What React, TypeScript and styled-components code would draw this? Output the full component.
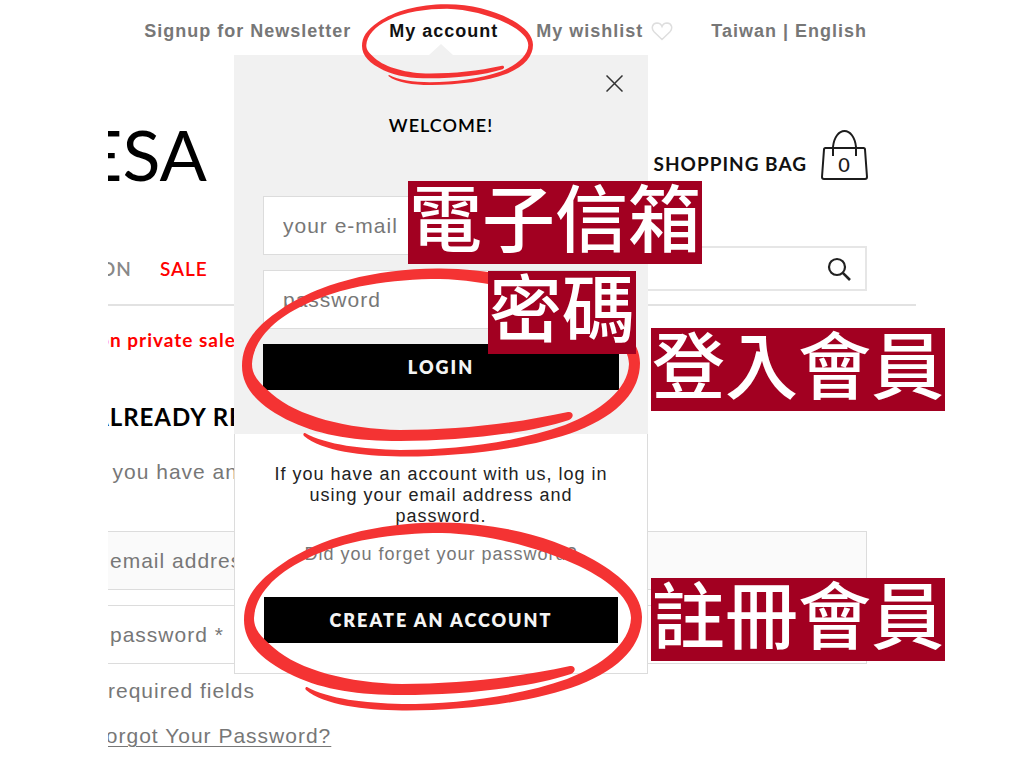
import React from "react";
import styled, { createGlobalStyle, css } from "styled-components";

const GlobalStyle = createGlobalStyle`
  * { box-sizing: border-box; }
  body { margin: 0; background: #fff; overflow-x: hidden; }
  h1, h2, p { margin: 0; font-weight: inherit; }
  button, input { font: inherit; letter-spacing: inherit; border-radius: 0; }
  a { color: inherit; text-decoration: none; }
`;

const grotesk = css`
  font-family: "Liberation Sans", Arial, sans-serif;
  letter-spacing: 1px;
`;

const geometric = css`
  font-family: Lato, "Open Sans", sans-serif;
  letter-spacing: 1px;
`;

const Page = styled.div`
  ${grotesk}
  min-height: 768px;
  padding: 0 108px;
  color: #777;
  font-size: 21px;
  line-height: 28px;
`;

const Site = styled.div`
  position: relative;
`;

const Cropped = styled.div`
  overflow: hidden;
  padding-bottom: 18px;
`;

const TopBar = styled.nav`
  display: flex;
  justify-content: flex-end;
  align-items: center;
  gap: 38px;
  height: 62px;
  padding-right: 49px;
  font-size: 18px;
  font-weight: 700;
  white-space: nowrap;
`;

const TopLink = styled.a`
  display: flex;
  align-items: center;
  gap: 8px;
`;

const AccountButton = styled.button`
  padding: 0;
  border: 0;
  background: none;
  color: #111;
`;

const Header = styled.header`
  display: flex;
  justify-content: space-between;
  align-items: flex-end;
  height: 119px;
  padding-right: 48px;
`;

const Brand = styled.a`
  display: flex;
  justify-content: flex-end;
  width: 99px;
  font-family: Lato, sans-serif;
  font-size: 70px;
  line-height: 54px;
  letter-spacing: 0;
  color: #000;
`;

const BagLink = styled.a`
  ${geometric}
  display: flex;
  align-items: flex-end;
  gap: 14px;
  font-size: 19px;
  line-height: 34px;
  font-weight: 700;
  color: #111;
`;

const NavRow = styled.div`
  display: flex;
  justify-content: space-between;
  align-items: center;
  padding: 65px 49px 13px 0;
  border-bottom: 2px solid #e2e2e2;
`;

const NavLinks = styled.nav`
  ${geometric}
  display: flex;
  gap: 28px;
  margin-left: -8px;
  font-size: 19px;
  font-weight: 600;
`;

const NavLink = styled.a<{ $sale?: boolean }>`
  color: ${(p) => (p.$sale ? "#f00" : "#888")};
`;

const Search = styled.form`
  display: flex;
  align-items: center;
  width: 300px;
  height: 45px;
  border: 2px solid #e6e6e6;
`;

const SearchInput = styled.input`
  flex: 1;
  min-width: 0;
  border: 0;
  outline: 0;
  background: none;
`;

const IconButton = styled.button`
  display: flex;
  padding: 0 14px;
  border: 0;
  background: none;
`;

const Main = styled.main`
  margin: 0 49px 0 -16px;
`;

const Promo = styled.p`
  ${geometric}
  margin-top: 20px;
  padding-left: 6px;
  font-size: 19px;
  font-weight: 700;
  color: #f00;
`;

const Heading = styled.h1`
  ${geometric}
  margin-top: 49px;
  font-size: 24px;
  font-weight: 700;
  color: #000;
`;

const Intro = styled.p`
  margin-top: 27px;
`;

const LoginForm = styled.form`
  display: flex;
  flex-direction: column;
  gap: 15px;
  margin-top: 45px;
`;

const Field = styled.input<{ $tinted?: boolean; $inset: number }>`
  width: 100%;
  height: 59px;
  padding: 0 ${(p) => p.$inset}px;
  border: 1px solid #dcdcdc;
  outline: 0;
  background: ${(p) => (p.$tinted ? "#fafafa" : "#fff")};
  &::placeholder {
    color: #777;
    opacity: 1;
  }
`;

const Required = styled.p`
  margin-top: 13px;
`;

const Forgot = styled.p`
  margin-top: 17px;
  a {
    text-decoration: underline;
    text-underline-offset: 3px;
    text-decoration-thickness: 1px;
  }
`;

const Popover = styled.section`
  position: absolute;
  top: 55px;
  right: 268px;
  width: 414px;
  &::before {
    content: "";
    position: absolute;
    top: -11px;
    left: 195px;
    border: 12px solid transparent;
    border-top: 0;
    border-bottom: 11px solid #f1f1f1;
  }
`;

const SignIn = styled.form`
  display: flex;
  flex-direction: column;
  gap: 15px;
  padding: 20px 29px 44px;
  background: #f1f1f1;
`;

const Close = styled.button`
  display: flex;
  align-self: flex-end;
  margin-right: -4px;
  padding: 0;
  border: 0;
  background: none;
`;

const Welcome = styled.h2`
  ${geometric}
  margin: 4px 0 42px;
  text-align: center;
  font-size: 18px;
  font-weight: 600;
  color: #000;
`;

const Action = styled.button`
  ${geometric}
  width: 100%;
  height: 46px;
  padding: 0;
  border: 0;
  background: #000;
  color: #f4f4f4;
  font-size: 18px;
  font-weight: 800;
  letter-spacing: 2px;
`;

const SignUp = styled.div`
  padding: 30px 29px;
  border: 1px solid #dcdcdc;
  border-top: 0;
  background: #fff;
  text-align: center;
  font-size: 18px;
  line-height: 21px;
`;

const Hint = styled.p`
  padding: 0 6px;
  color: #222;
`;

const Reminder = styled.p`
  margin: 17px 0 32px;
`;

const Ring = styled.svg<{ $x: number; $y: number; $w: number }>`
  position: absolute;
  left: ${(p) => p.$x}px;
  top: ${(p) => p.$y}px;
  width: ${(p) => p.$w}px;
  overflow: visible;
  pointer-events: none;
`;

const Tag = styled.span<{ $x: number; $y: number }>`
  position: absolute;
  left: ${(p) => p.$x}px;
  top: ${(p) => p.$y}px;
  padding: 0 1px 16px;
  background: #a20021;
  color: #fff;
  font-family: "Noto Sans CJK TC", sans-serif;
  font-size: 73px;
  font-weight: 500;
  line-height: 67px;
  letter-spacing: 0;
  white-space: nowrap;
`;

function HandDrawnRing(props: { x: number; y: number; w: number }) {
  return (
    <Ring $x={props.x} $y={props.y} $w={props.w} viewBox="0 0 398 189" aria-hidden="true">
      <path
        fill="#f43333"
        d="M326 144 C270 156 215 162 158 162 C105 161 55 148 30 126 C16 114 10 107 10 96 C11 74 30 52 62 37 C100 18 150 11 198 11 C245 12 297 26 335 44 C368 60 387 78 387 96 C386 122 358 143 323 157 C275 174 215 182 158 182 C120 181 85 177 63 165 C61 165 61 167 62 168 C80 183 120 188 158 188.500 C220 189 290 180 335 163 C378 146 398 122 398 95 C398 74 380 55 350 38 C310 15 255 1 198 0.500 C135 0 75 16 38 42 C10 61 0 78 0 98 C0 121 18 139 50 154 C80 168 115 173 158 173 C215 173 285 166 327 152 C333 149 331 143 326 144 Z"
      />
    </Ring>
  );
}

export default function App() {
  return (
    <Page>
      <GlobalStyle />
      <Site>
        <Cropped>
          <TopBar aria-label="Account">
            <TopLink href="#newsletter">Signup for Newsletter</TopLink>
            <AccountButton aria-expanded="true">My account</AccountButton>
            <TopLink href="#wishlist">
              My wishlist
              <svg width="22" height="19" viewBox="0 0 22 19" fill="none" stroke="#dedede" strokeWidth="1.500" aria-hidden="true">
                <path d="M11 17.500 L3 9.800 C0 6.500 1 1.300 6 1 C8.500 1 10.200 2.400 11 4.500 C11.800 2.400 13.500 1 16 1 C21 1.300 22 6.500 19 9.800 Z" />
              </svg>
            </TopLink>
            <TopLink href="#region">Taiwan | English</TopLink>
          </TopBar>

          <Header>
            <Brand href="#home">ESA</Brand>
            <BagLink href="#bag">
              SHOPPING BAG
              <svg width="47" height="51" viewBox="0 0 47 51" fill="none" stroke="#1c1c1c" strokeWidth="2" aria-label="0 items">
                <path d="M4.500 18 H42.500 Q44 18 44 19.500 L46 47 Q46 49 44 49 H3 Q1 49 1 47 L3 19.500 Q3 18 4.500 18 Z" />
                <path d="M12 26 V17 C13 7 18 1 23.500 1 C29 1 34 7 35 17 V26" />
                <text x="23" y="42" textAnchor="middle" fontFamily="Lato, sans-serif" fontSize="20" fontWeight="500" letterSpacing="0" fill="#1c1c1c" stroke="none">0</text>
              </svg>
            </BagLink>
          </Header>

          <NavRow>
            <NavLinks aria-label="Shop">
              <NavLink href="#on">ON</NavLink>
              <NavLink href="#sale" $sale>SALE</NavLink>
            </NavLinks>
            <Search role="search">
              <SearchInput type="search" aria-label="Search" />
              <IconButton type="button" aria-label="Search">
                <svg width="24" height="24" viewBox="0 0 24 24" fill="none" stroke="#222" strokeWidth="2.200" aria-hidden="true">
                  <circle cx="10" cy="10" r="8" />
                  <path d="M15.800 15.800 L23 23" strokeWidth="2.600" />
                </svg>
              </IconButton>
            </Search>
          </NavRow>

          <Main>
            <Promo>on private sale</Promo>
            <Heading>ALREADY RE</Heading>
            <Intro>If you have an</Intro>
            <LoginForm>
              <Field $inset={17} $tinted type="email" placeholder="email address" aria-label="email address" />
              <Field $inset={17} type="password" placeholder="password *" aria-label="password" />
            </LoginForm>
            <Required>* required fields</Required>
            <Forgot>
              <a href="#forgot">Forgot Your Password?</a>
            </Forgot>
          </Main>
        </Cropped>

        <Popover aria-label="My account">
          <SignIn>
            <Close type="button" aria-label="Close">
              <svg width="17" height="17" viewBox="0 0 17 17" stroke="#333" strokeWidth="1.500" aria-hidden="true">
                <path d="M0.500 0.500 L16.500 16.500 M16.500 0.500 L0.500 16.500" />
              </svg>
            </Close>
            <Welcome>WELCOME!</Welcome>
            <Field $inset={19} type="email" placeholder="your e-mail" aria-label="your e-mail" />
            <Field $inset={19} type="password" placeholder="password" aria-label="password" />
            <Action type="button">LOGIN</Action>
          </SignIn>
          <SignUp>
            <Hint>If you have an account with us, log in using your email address and password.</Hint>
            <Reminder>
              <a href="#reminder">Did you forget your password?</a>
            </Reminder>
            <Action type="button">CREATE AN ACCOUNT</Action>
          </SignUp>

          <HandDrawnRing x={128} y={-51} w={171} />
          <HandDrawnRing x={8} y={213} w={398} />
          <HandDrawnRing x={10} y={467} w={398} />
          <Tag $x={174} $y={126}>電子信箱</Tag>
          <Tag $x={254} $y={216}>密碼</Tag>
          <Tag $x={417} $y={273}>登入會員</Tag>
          <Tag $x={417} $y={523}>註冊會員</Tag>
        </Popover>
      </Site>
    </Page>
  );
}
